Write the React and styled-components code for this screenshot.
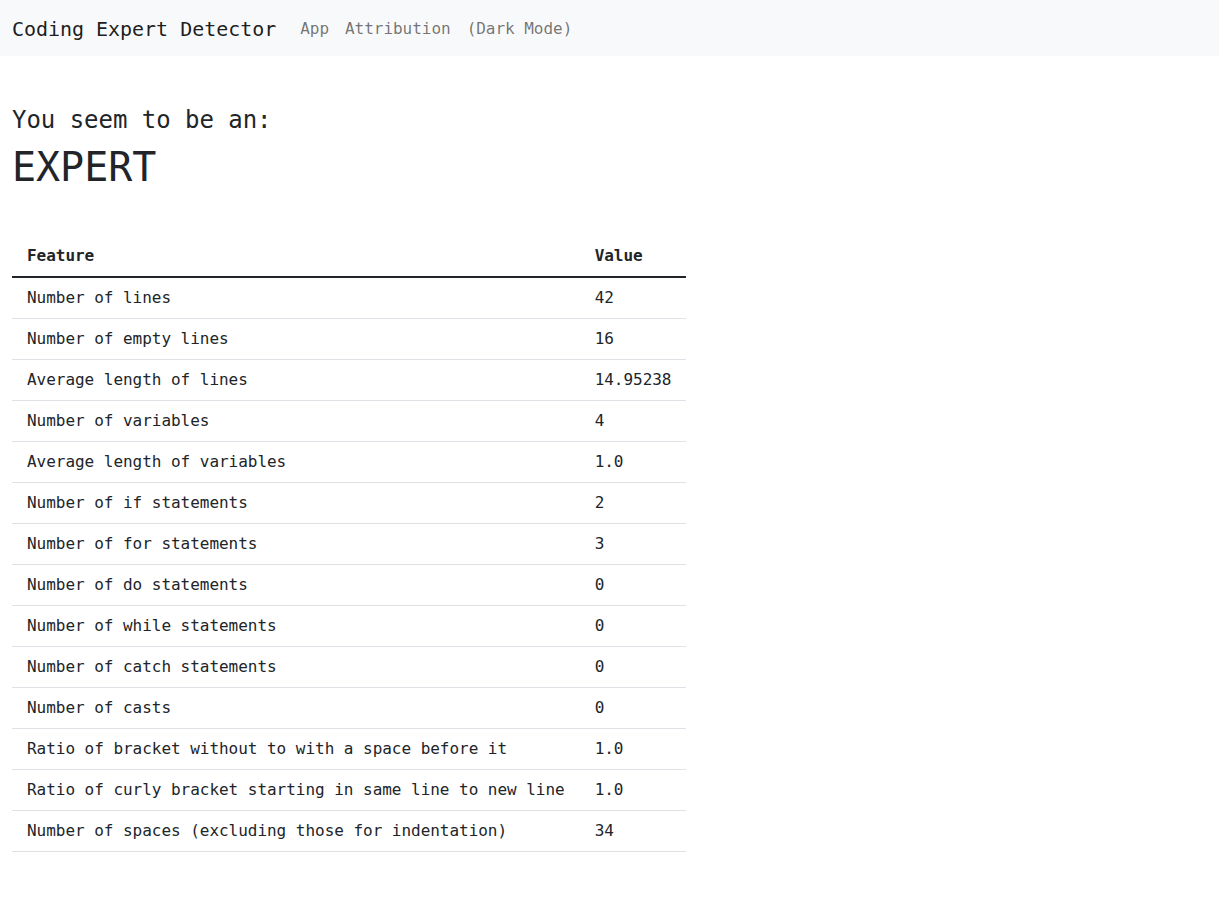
import React from "react";
import styled, { createGlobalStyle } from "styled-components";

const GlobalStyle = createGlobalStyle`
  body {
    margin: 0;
    font-family: "DejaVu Sans Mono", "Liberation Mono", monospace;
    font-size: 16px;
    line-height: 1.5;
    letter-spacing: -0.002em;
    color: #212529;
    background: #ffffff;
  }
`;

const Navbar = styled.nav`
  display: flex;
  align-items: center;
  height: 56px;
  padding: 2px 12px 0;
  background-color: #f8f9fa;
  box-sizing: border-box;
`;

const Brand = styled.a`
  font-size: 20px;
  font-weight: 500;
  color: rgba(0, 0, 0, 0.9);
  margin-right: 16px;
  text-decoration: none;
`;

const NavLink = styled.a`
  font-size: 16px;
  padding: 8px;
  color: rgba(0, 0, 0, 0.55);
  text-decoration: none;
  cursor: pointer;
`;

const Container = styled.main`
  padding: 50px 12px 40px;
`;

const Subtitle = styled.h4`
  margin: 0 0 8px;
  font-size: 24px;
  font-weight: 500;
  line-height: 1.2;
`;

const Verdict = styled.h1`
  margin: 0 0 45px;
  font-size: 40px;
  font-weight: 500;
  line-height: 1.2;
`;

const Table = styled.table`
  border-collapse: collapse;
`;

const HeadCell = styled.th`
  text-align: left;
  font-weight: bold;
  padding: 8px 15px;
  border-bottom: 2px solid #212529;
`;

const Cell = styled.td`
  padding: 8px 15px;
  border-bottom: 1px solid #dee2e6;
  white-space: nowrap;
`;

const rows = [
  ["Number of lines", "42"],
  ["Number of empty lines", "16"],
  ["Average length of lines", "14.95238"],
  ["Number of variables", "4"],
  ["Average length of variables", "1.0"],
  ["Number of if statements", "2"],
  ["Number of for statements", "3"],
  ["Number of do statements", "0"],
  ["Number of while statements", "0"],
  ["Number of catch statements", "0"],
  ["Number of casts", "0"],
  ["Ratio of bracket without to with a space before it", "1.0"],
  ["Ratio of curly bracket starting in same line to new line", "1.0"],
  ["Number of spaces (excluding those for indentation)", "34"],
];

export default function App() {
  return (
    <>
      <GlobalStyle />
      <Navbar>
        <Brand>Coding Expert Detector</Brand>
        <NavLink>App</NavLink>
        <NavLink>Attribution</NavLink>
        <NavLink>(Dark Mode)</NavLink>
      </Navbar>
      <Container>
        <Subtitle>You seem to be an:</Subtitle>
        <Verdict>EXPERT</Verdict>
        <Table>
          <thead>
            <tr>
              <HeadCell>Feature</HeadCell>
              <HeadCell>Value</HeadCell>
            </tr>
          </thead>
          <tbody>
            {rows.map(([name, value]) => (
              <tr key={name}>
                <Cell>{name}</Cell>
                <Cell>{value}</Cell>
              </tr>
            ))}
          </tbody>
        </Table>
      </Container>
    </>
  );
}
